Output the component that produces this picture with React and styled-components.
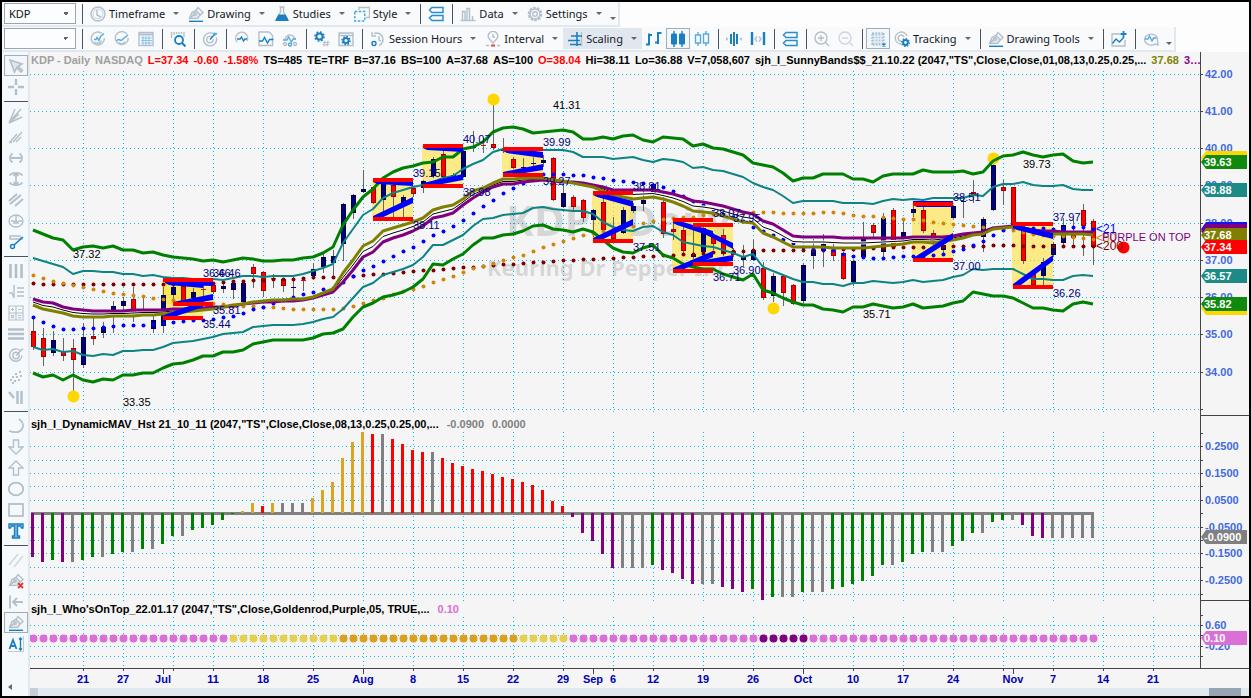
import React from "react";
import styled, { createGlobalStyle } from "styled-components";

const GlobalStyle = createGlobalStyle`
  *, *::before, *::after { box-sizing: border-box; }
  body { margin: 0; background: #f5f5f5; font-family: "Noto Sans", "Open Sans", sans-serif; }
`;

const chartFont = '"Liberation Sans", Arial, sans-serif';

/* ---------- frame ---------- */

const Frame = styled.div`
  min-height: 100vh;
  border: 2px solid #000;
  background: #fdfdfe;
  display: flex;
  flex-direction: column;
  overflow: hidden;
`;

const ToolRow = styled.div`
  width: fit-content;
  height: 25px;
  padding: 0 2px;
  display: flex;
  align-items: center;
  background: #f8fafc;
  border-right: 2px solid #e1e8f0;
  border-bottom: 2px solid #e1e8f0;
  white-space: nowrap;
`;

const Combo = styled.select`
  appearance: none;
  width: 72px;
  height: 21px;
  margin: 0 2px 0 0;
  padding: 0 4px;
  border: 1px solid #9aa6b5;
  border-radius: 0;
  outline: 0;
  font: 11px "Noto Sans", sans-serif;
  color: #111;
  background:
    linear-gradient(135deg, #666 50%, transparent 50%) 61px 8px / 3px 3px no-repeat,
    linear-gradient(225deg, #666 50%, transparent 50%) 58px 8px / 3px 3px no-repeat,
    #fcfdfe;
`;

const Divider = styled.div`
  flex: none;
  width: 1px;
  height: 20px;
  margin: 0 3px 0 4px;
  background: #4a5260;
`;

const IconButton = styled.button`
  flex: none;
  width: 24px;
  height: 21px;
  padding: 0;
  display: flex;
  align-items: center;
  justify-content: center;
  border: 1px solid ${(p) => (p.$on ? "#a2adba" : "transparent")};
  background: ${(p) => (p.$on ? "#f4f7fa" : "transparent")};
`;

const MenuButton = styled.button`
  flex: none;
  height: 21px;
  padding: 0 5px 0 4px;
  border: 0;
  display: flex;
  align-items: center;
  gap: 3px;
  font: 11px "Noto Sans", sans-serif;
  color: #14181e;
  background: ${(p) => (p.$on ? "#e0e7ef" : "transparent")};
`;

const Caret = styled.span`
  flex: none;
  margin-left: 5px;
  border: 3px solid transparent;
  border-top-color: #666;
  border-bottom: 0;
`;

const Overflow = styled(Caret)`
  margin: 9px 0 0 3px;
`;

const Main = styled.div`
  flex: 1;
  display: flex;
  min-width: 0;
`;

const SideBar = styled.nav`
  flex: none;
  width: 28px;
  padding: 3px 0 0 2px;
  background: #f6f9fb;
  border-right: 2px solid #e1e8f0;
  display: flex;
  flex-direction: column;
`;

const SideDivider = styled.div`
  width: 24px;
  height: 1px;
  margin: 4px 0 3px;
  background: #4a5260;
`;

const SideEnd = styled.span`
  margin: auto 0 6px 4px;
  border: 3px solid transparent;
  border-right: 4px solid #667;
  border-left: 0;
  width: 4px;
`;

/* ---------- icons ---------- */

const G = "#b3bfca";
const B = "#1a7fc1";
const L = "#5aa9dc";

const Svg = styled.svg`
  flex: none;
  width: 16px;
  height: 16px;
  fill: none;
  stroke: ${G};
  stroke-width: 1.4;
`;

const pen = (
  <g>
    <path d="M1.5 12.5L4 6.5l4-2.2 4.3 4.6-2.6 3.3z" fill="#e3e9ee" />
    <path d="M2 12l4-3.6M8 4.3L10 1.5l5 5-2.7 2.4" />
    <circle cx="7" cy="8" r="1.3" />
  </g>
);

const glyphs = {
  clock: <><circle cx="8" cy="8" r="7" /><circle cx="8" cy="8" r="5" strokeWidth="0.7" /><path d="M7 4v5l4 2" /></>,
  pen: <>{pen}<path d="M1 15.3h14" stroke={B} /></>,
  flask: <><path d="M5.5 1h5M6.5 1v5L2 13.5M9.5 1v5L14 13.5" /><path d="M4.5 8.5h7l3.5 6.5H1z" fill={B} stroke="none" /></>,
  style: <><path d="M5 4V1.5h10.5v10H12" /><path d="M.8 5.5h10v9.500h-10z" stroke="#38a9e4" strokeDasharray="2.5 1.5" /></>,
  layers: <path d="M4 1.5h11v5H4L1.5 4zM4 9.500h11v5H4L1.5 12z" stroke="#2c8dcb" strokeWidth="1.5" />,
  data: <><path d="M.5 14.5h15" /><path d="M2.5 14V5.5h2.500V14M7 14V2.500h2.500V14M12.500 14v-4" /></>,
  gear: <><circle cx="8" cy="8" r="6.2" strokeDasharray="2.6 1.2" strokeWidth="2.2" /><circle cx="8" cy="8" r="5" /><circle cx="8" cy="8" r="2.2" /></>,
  target: <><path d="M12 3.2A6.500 6.500 0 1 0 14.300 6.500" /><path d="M10 6a3.300 3.300 0 1 0 1.200 2" /><path d="M8 8.500L13 3" stroke={B} /><path d="M11.500 1.500l-.3 3 3-.3L15.500 2z" fill={L} stroke="none" /></>,
  scan: <><path d="M13 3.200A6.500 6.500 0 1 0 14.300 7" /><path d="M3 10c2-4 4 2 6-2l5-4" stroke={L} /><path d="M5 11.500a3.500 3.500 0 0 0 6-1" /></>,
  scanTarget: <><path d="M12 2.500A6.500 6.500 0 1 0 14.300 7" /><path d="M4 8.500h2l1-2 2 3 1.500-4L14 2.500" stroke={L} /><path d="M4.500 11a4.200 4.200 0 0 0 7-1.500" /></>,
  table: <><rect x="1" y="1.500" width="14" height="13" /><path d="M1 3.500h14" strokeWidth="2" /><path d="M3 7h11M3 9.500h11M3 12h11M5 5v9M8 5v9M11 5v9" stroke="#8cc3e6" strokeWidth="1" /></>,
  lookup: <><path d="M1.500 1v6M4 1v3M6.500 1v2M9 1v2M11.500 1v2M14 1v5" /><circle cx="9" cy="9" r="4" stroke={B} strokeWidth="1.8" /><path d="M12 12l3.500 3.500" stroke={B} strokeWidth="2" /></>,
  pulse: <><path d="M3 11A6 6 0 1 1 13 10" /><path d="M3 8h3l1.500-2 2 4 1.500-2h2" stroke={B} /></>,
  pulseBox: <><path d="M1 14.500V1h10l3.500 3.500v10z" /><path d="M1 10h3.500l2-3.500L9.500 12l2-3.500h4" stroke={B} /></>,
  pulseNet: <><path d="M3 9A5 5 0 1 1 13 9" /><path d="M1 9h4l1.500-3 3 5 1.500-3h3" stroke={L} /><circle cx="3" cy="13" r="1.5" /><circle cx="8" cy="13.500" r="1.5" stroke={L} /><circle cx="13" cy="13" r="1.5" /></>,
  gearHash: <><circle cx="5.500" cy="5.500" r="3.100" stroke={B} strokeWidth="2" /><circle cx="5.500" cy="5.500" r="4.600" stroke={B} strokeWidth="1.500" strokeDasharray="1.800 1.800" /><path d="M11 9.500l-1 6M14 9.500l-1 6M9 11.500h6.500M8.500 13.700h6.500" strokeWidth="1" /></>,
  gearBox: <><path d="M1 2h14v12.500H1zM1 4.500h14" /><circle cx="8" cy="9.500" r="2.600" stroke={B} strokeWidth="2" /><circle cx="8" cy="9.500" r="4" stroke={B} strokeWidth="1.500" strokeDasharray="1.600 1.500" /></>,
  session: <><path d="M4 2.500A6.500 6.500 0 1 1 9 14.500M2 1v4h4M9 5v4l2 1" /><circle cx="4" cy="12.500" r="2" stroke={B} /></>,
  interval: <><path d="M8 12L4 7.500a4.700 4.700 0 1 1 8 0zM8 3v3h2" /><path d="M1 14.500h3M12 14.500h3" /><path d="M6 14.500h4" stroke="#e8432e" strokeWidth="2" /></>,
  scaling: <><path d="M14.500 1v14" /><path d="M4 5h11M1 9.500h12M3 13.500h11M10 1v14" stroke={B} strokeWidth="1.600" /></>,
  ohlc: <><path d="M0 13.500h3.500M3 2.500v12M3 4h3" stroke={B} strokeWidth="2" /><path d="M9 11.500h3.500M12 1v12M12 2h3.500" stroke={B} strokeWidth="2" /></>,
  candles: <><path d="M4 0v16M12 0v16" stroke={B} /><rect x="1" y="2.500" width="6" height="11" rx="1" fill={B} stroke="none" /><rect x="9" y="2.500" width="6" height="11" rx="1" fill={B} stroke="none" /></>,
  hollow: <path d="M4 1v3M4 12v3M12 0v3M12 12v3M1.500 4h5v8h-5zM9.500 3h5v9h-5z" stroke={L} />,
  narrow: <><path d="M5 3v10M8 1v14M11 3v10" stroke={B} strokeWidth="2" /><path d="M0 6l2.500 2L0 10zM16 6l-2.500 2 2.500 2z" fill={G} stroke="none" /></>,
  widen: <><path d="M2 1v13M14 1v13" stroke={B} strokeWidth="2.400" /><path d="M7 5.500L5 8l2 2.500M9 5.500L11 8l-2 2.500" /></>,
  zoomIn: <><circle cx="7" cy="7" r="6" /><path d="M4 7h6M7 4v6M11.500 11.500L15 15" /></>,
  zoomOut: <g opacity=".6"><circle cx="7" cy="7" r="6" /><path d="M4 7h6M11.500 11.500L15 15" /></g>,
  grid: <><rect x="2" y="2" width="12" height="12" fill="#b5c8d8" stroke="#8fb8d6" strokeWidth="1" strokeDasharray="2 1" /><path d="M5 2v12M8 2v12M11 2v12M2 5h12M2 8h12M2 11h12" stroke="#f4f7fa" strokeWidth="1" /><path d="M12.500 12.500l3 3M15.500 12.500l-3 3" stroke={B} /></>,
  track: <><path d="M13 5A6 6 0 1 0 7 13M10 6a3 3 0 1 0-3 4" /><circle cx="11.500" cy="11.500" r="2.400" stroke={B} strokeWidth="2" /><circle cx="11.500" cy="11.500" r="3.900" stroke={B} strokeWidth="1.200" strokeDasharray="1.500 1.500" /></>,
  addChart: <><path d="M9 3H1v12h13V9" /><path d="M1.500 12.500L5 8l3.500 3L13 6" stroke={B} /><path d="M12.500 0v6M9.500 3h6" stroke={B} strokeWidth="1.800" /></>,
  chat: <><path d="M12 13A6.500 5.500 0 1 1 14.500 9.500L15 14z" /><path d="M2 8h3l1.500-3 2.500 5 1.500-3h3" stroke={L} /></>,
  cursor: <path d="M2 2l4.500 12 2.300-4.300L13 14l1.500-1.500-4.300-4.200L14 6z" fill="#dfe5ec" strokeWidth="1.600" />,
  cross: <path d="M8 0v6M8 10v6M0 8h6M10 8h6" strokeWidth="2.400" />,
  fan: <path d="M1 15L7 1M1 15l10-9M1 15l13-6M4 11l9-10M1 15l4-4" />,
  fanSmall: <path d="M2 13l7-8M5 13l9-10M8 13l5-5M1 13.500h3" />,
  hSpan: <path d="M3 8h10M4.500 3.500C1 6 1 10 4.500 12.500M11.500 3.500c3.500 2.500 3.500 6.500 0 9" strokeWidth="1.800" />,
  vSpan: <path d="M8 2v12M1.500 4.500C4 1 12 1 14.500 4.500M1.500 11.500c2.500 3.500 10.500 3.500 13 0M5.500 5L8 2l2.500 3M5.500 11L8 14l2.500-3" strokeWidth="1.600" />,
  channel: <path d="M1 9L9 2M2 12L13 3M7 14l8-7" strokeWidth="2" />,
  compass: <><ellipse cx="8" cy="8" rx="7" ry="6" /><path d="M8 2v5M3 8h3M10 8h4M6 10l2-3 2 3z" /></>,
  ruler: <><path d="M2 2h10l2 3H2z" /><circle cx="4.500" cy="12.500" r="2" stroke={B} /><path d="M6 11l9-8" stroke={B} strokeWidth="1.600" /></>,
  bars3: <path d="M2.500 1v14M8 1v14M13.500 1v14" strokeWidth="2.600" />,
  levels: <path d="M1 9h3l2 5V1M9 4h7M9 8h7M9 12h7" />,
  calc: <path d="M1 1h14v14H1zM8 1v14M1 8h14M3 4.500h3M4.500 3v3M10 4.500h3M3 10l3 3M6 10l-3 3M10 10.500h3M10 12.800h3" strokeWidth="1.100" />,
  lines3: <path d="M0 3.500h16M0 8h16M0 12.500h16" strokeWidth="2.600" />,
  spiral: <><path d="M15 1.500L8 8.500M12 3.500A6.200 6.200 0 1 0 14 8.500" /><circle cx="8" cy="8.500" r="3.200" /></>,
  dots: <path d="M2 12h2M6 13h2M10 12h2M4 9h2M8 9h2M12 8h2M7 6h2M11 4h2M4 15h2" strokeWidth="2" />,
  slash: <path d="M1 3l5 6M9.500 2v13M13.500 2v13" strokeWidth="2.400" />,
  arc: <path d="M11 1c4 3 5 7 3 10s-7 4-13 2" strokeWidth="1.800" />,
  down: <path d="M5.500 1h5v7H15l-7 7-7-7h4.500z" />,
  up: <path d="M5.500 15h5V8H15L8 1 1 8h4.500z" />,
  oval: <ellipse cx="8" cy="8" rx="7.200" ry="6.300" strokeWidth="1.800" />,
  rect: <rect x="1" y="2" width="14" height="12" strokeWidth="1.800" />,
  text: <path d="M1 1h14v4h-1.500l-1-2H9.500v10h2v2h-7v-2h2V3H3.500l-1 2H1z" fill="#7fbbe4" stroke={B} />,
  hatch: <path d="M1 13L10 2M6 15l9-11" opacity=".6" />,
  penX: <>{pen}<path d="M10 10l5 5M15 10l-5 5" stroke="#e8362e" strokeWidth="1.800" /></>,
  toStart: <path d="M2 1.500v13M15 8H5M9 4L5 8l4 4" strokeWidth="1.800" />,
  aText: <><path d="M1.500 13L5 4l3.500 9M2.700 10h4.600" stroke={B} strokeWidth="1.800" /><path d="M12.500 2v12M11 3.500L12.500 2 14 3.500M11 12.500l1.500 1.500 1.500-1.500" stroke={B} /><path d="M15.500 0v15.500H0" strokeWidth=".8" /></>,
};

const Icon = ({ name }) => (
  <Svg viewBox="0 0 16 16" aria-hidden="true">{glyphs[name]}</Svg>
);

const Tool = ({ icon, on }) => (
  <IconButton type="button" $on={on} aria-label={icon}><Icon name={icon} /></IconButton>
);

const Menu = ({ icon, on, children }) => (
  <MenuButton type="button" $on={on}>
    <Icon name={icon} />{children}<Caret />
  </MenuButton>
);

/* ---------- chart pieces ---------- */

const Charts = styled.main`
  flex: 1;
  min-width: 0;
  background: #f5f5f5;
  font-family: ${chartFont};
`;

const Panel = styled.section`
  display: flex;
`;

const PlotColumn = styled.div`
  flex: 1;
  min-width: 0;
`;

const PanelTitle = styled.div`
  height: 16px;
  padding: 0 1px;
  display: flex;
  gap: ${(p) => p.$gap}px;
  overflow: hidden;
  white-space: nowrap;
  font: bold 11px/16px ${chartFont};
  color: #000;
`;

const Value = styled.span`
  flex: none;
  color: ${(p) => p.$c || "#000"};
`;

const Clip = styled.span`
  flex: none;
  width: 18px;
  overflow: hidden;
  text-overflow: ellipsis;
  color: #8b008b;
`;

const Canvas = styled.svg`
  display: block;
  width: 100%;
  height: ${(p) => p.$h}px;
`;

const AxisCanvas = styled(Canvas)`
  flex: none;
  width: 49px;
`;

const ScrollTrack = styled.div`
  height: 8px;
  padding-right: 8px;
  display: flex;
  justify-content: space-between;
  background: #e1e9f0;
`;

const Thumb = styled.div`
  width: ${(p) => p.$w}px;
  background: ${(p) => p.$c};
`;

const LEFT = 30;
const STEP = 10;
const barX = (i) => 33 + i * STEP;

const gridX = [83, 123, 173, 213, 263, 313, 363, 413, 463, 513, 563, 613, 653, 703, 753, 803, 853, 903, 953, 1003, 1053, 1103, 1153];

const Grid = ({ ys, top, bottom }) => (
  <g stroke="#00bfff" strokeWidth="1" strokeDasharray="1 3" shapeRendering="crispEdges">
    {ys.map((y) => <path key={y} d={`M30 ${y + 0.5}H3000`} />)}
    {gridX.map((x) => <path key={x} d={`M${x + 0.5} ${top}V${bottom}`} />)}
  </g>
);

const Plot = ({ top, h, children }) => (
  <Canvas $h={h}><g transform={`translate(${-LEFT} ${-top})`}>{children}</g></Canvas>
);

/* one value per bar, ten bars to a line */
const upperGreen = [
  230, 234, 238, 240, 250, 247, 246, 248, 246, 250,
  250, 253, 252, 255, 257, 258, 259, 261, 260, 262,
  260, 258, 259, 261, 261, 260, 260, 258, 257, 253,
  247, 225, 210, 197, 189, 178, 172, 168, 166, 163,
  162, 157, 157, 149, 147, 142, 132, 128, 127, 129,
  133, 132, 131, 130, 132, 139, 139, 137, 139, 136,
  135, 140, 142, 137, 138, 139, 146, 144, 148, 149,
  152, 155, 163, 165, 167, 173, 181, 178, 178, 174,
  174, 174, 179, 179, 182, 176, 174, 174, 174, 170,
  172, 172, 172, 171, 174, 172, 161, 156, 155, 152,
  155, 157, 155, 154, 161, 163, 162,
];
const lowerGreen = [
  373, 377, 375, 380, 375, 380, 382, 379, 380, 375,
  375, 373, 373, 368, 364, 363, 360, 356, 356, 352,
  352, 350, 344, 342, 340, 340, 340, 340, 338, 334,
  333, 329, 317, 307, 303, 297, 295, 292, 287, 279,
  264, 265, 259, 254, 245, 238, 238, 235, 234, 231,
  226, 225, 229, 230, 232, 229, 232, 240, 248, 252,
  253, 248, 245, 255, 258, 264, 267, 269, 269, 274,
  277, 280, 274, 290, 293, 298, 302, 305, 305, 309,
  310, 312, 307, 307, 304, 306, 308, 307, 304, 308,
  307, 306, 303, 301, 292, 294, 296, 296, 298, 303,
  308, 308, 310, 311, 304, 302, 304,
];
const upperTeal = [
  258, 261, 264, 267, 274, 271, 271, 272, 272, 274,
  274, 276, 275, 277, 278, 278, 279, 279, 279, 280,
  278, 276, 276, 277, 276, 276, 276, 274, 271, 268,
  264, 243, 229, 215, 209, 198, 193, 190, 187, 185,
  182, 178, 176, 169, 164, 160, 152, 149, 149, 149,
  149, 150, 150, 150, 152, 157, 157, 157, 159, 158,
  157, 160, 162, 159, 160, 162, 168, 167, 170, 171,
  174, 177, 183, 187, 190, 196, 203, 201, 201, 201,
  201, 203, 203, 203, 204, 201, 199, 200, 199, 200,
  198, 198, 198, 198, 195, 196, 187, 184, 184, 182,
  185, 186, 186, 185, 189, 190, 190,
];
const lowerTeal = [
  347, 350, 349, 352, 351, 355, 356, 354, 355, 351,
  351, 350, 350, 347, 343, 342, 341, 339, 337, 334,
  333, 332, 327, 326, 325, 325, 325, 324, 322, 319,
  317, 309, 298, 287, 283, 275, 272, 269, 265, 257,
  245, 245, 240, 235, 226, 219, 218, 215, 214, 213,
  208, 207, 209, 210, 211, 211, 214, 222, 227, 230,
  231, 227, 226, 232, 235, 242, 244, 246, 247, 250,
  253, 257, 254, 267, 271, 275, 279, 282, 282, 284,
  284, 286, 283, 283, 281, 282, 283, 282, 280, 282,
  281, 280, 277, 275, 269, 270, 269, 269, 269, 274,
  279, 279, 280, 280, 276, 275, 276,
];
const purple = [
  299, 302, 303, 307, 309, 310, 311, 311, 311, 311,
  310, 310, 310, 310, 309, 309, 308, 308, 307, 307,
  306, 304, 303, 302, 302, 301, 301, 300, 298, 295,
  292, 282, 270, 257, 252, 242, 238, 235, 231, 226,
  218, 216, 213, 205, 198, 192, 187, 184, 184, 182,
  181, 180, 181, 182, 182, 183, 185, 187, 190, 190,
  190, 190, 190, 192, 194, 197, 201, 202, 204, 206,
  209, 212, 214, 221, 224, 230, 236, 237, 237, 237,
  237, 238, 238, 238, 238, 238, 238, 238, 237, 237,
  237, 237, 236, 234, 233, 232, 228, 227, 226, 228,
  230, 231, 231, 232, 232, 232, 232,
];
const olive = [
  305, 309, 311, 313, 316, 317, 317, 317, 316, 316,
  316, 315, 315, 314, 313, 312, 311, 310, 309, 307,
  305, 304, 302, 301, 300, 300, 299, 299, 297, 293,
  289, 273, 260, 246, 241, 231, 228, 225, 222, 218,
  210, 207, 205, 199, 191, 188, 183, 179, 179, 178,
  178, 178, 180, 181, 183, 185, 187, 191, 195, 197,
  199, 198, 197, 199, 202, 206, 211, 212, 213, 216,
  219, 222, 223, 233, 237, 242, 247, 247, 247, 247,
  248, 248, 248, 248, 247, 246, 245, 244, 242, 242,
  243, 241, 240, 238, 235, 234, 229, 228, 227, 228,
  231, 233, 234, 234, 234, 234, 235,
];
const blueDots = [
  317, 322, 326, 329, 329, 328, 328, 327, 326, 325,
  325, 325, 324, 323, 322, 321, 320, 320, 319, 317,
  316, 313, 309, 307, 303, 300, 297, 294, 292, 289,
  288, 282, 276, 270, 266, 261, 256, 251, 247, 241,
  235, 231, 226, 220, 213, 206, 200, 193, 188, 183,
  178, 174, 174, 174, 175, 175, 177, 178, 180, 181,
  182, 183, 185, 187, 191, 196, 201, 205, 209, 213,
  217, 221, 227, 231, 235, 239, 243, 247, 249, 249,
  250, 254, 256, 257, 258, 258, 257, 256, 256, 256,
  255, 254, 251, 249, 245, 241, 235, 230, 227, 227,
  228, 228, 229, 228, 227, 227, 229,
];
const orangeDots = [
  275, 278, 281, 283, 285, 287, 289, 291, 293, 294,
  295, 296, 298, 299, 300, 301, 302, 302, 303, 304,
  306, 306, 306, 307, 307, 308, 309, 309, 309, 309,
  309, 308, 306, 303, 300, 298, 294, 291, 289, 286,
  282, 279, 276, 272, 268, 266, 263, 260, 257, 255,
  251, 247, 244, 241, 238, 235, 233, 231, 229, 228,
  226, 223, 221, 219, 218, 217, 217, 215, 214, 214,
  213, 213, 212, 212, 212, 213, 213, 213, 213, 212,
  212, 213, 215, 216, 216, 217, 218, 219, 219, 220,
  222, 223, 224, 225, 226, 227, 228, 229, 230, 232,
  234, 235, 236, 236, 237, 238, 239,
];
const maroonDots = [
  283, 284, 284, 284, 284, 284, 284, 284, 284, 284,
  284, 284, 284, 284, 284, 284, 284, 283, 283, 282,
  281, 281, 280, 280, 279, 279, 279, 278, 277, 277,
  277, 276, 276, 275, 274, 274, 273, 272, 271, 270,
  270, 269, 268, 267, 267, 266, 265, 264, 264, 263,
  262, 262, 261, 260, 260, 259, 259, 258, 258, 257,
  257, 256, 256, 255, 255, 254, 254, 253, 252, 252,
  251, 251, 250, 250, 250, 250, 250, 250, 250, 250,
  249, 249, 249, 249, 248, 248, 247, 247, 247, 247,
  247, 246, 246, 246, 246, 246, 245, 245, 245, 246,
  246, 246, 246, 246, 246, 246, 246,
];

/* rows: bar index, high, body top, body bottom, low, colour */
const candles = [
  [0, 318, 331, 347, 350, "r"], [1, 328, 338, 357, 366, "r"], [2, 331, 340, 353, 356, "b"], [3, 338, 352, 356, 361, "r"],
  [4, 339, 348, 360, 392, "r"], [5, 323, 337, 365, 368, "b"], [6, 317, 336, 339, 345, "r"], [7, 322, 327, 333, 338, "b"],
  [8, 301, 306, 315, 333, "b"], [9, 297, 301, 306, 311, "b"], [10, 287, 299, 313, 322, "r"], [11, 298, 312, 314, 316, "b"],
  [12, 316, 320, 329, 333, "b"], [13, 287, 295, 326, 333, "b"], [14, 283, 287, 295, 300, "b"], [15, 284, 286, 302, 305, "r"],
  [16, 288, 292, 298, 301, "b"], [17, 283, 289, 290, 296, "r"], [18, 283, 285, 292, 294, "r"], [19, 282, 286, 289, 293, "b"],
  [20, 280, 283, 290, 299, "b"], [21, 281, 283, 302, 303, "b"], [22, 264, 267, 274, 288, "r"], [23, 271, 272, 291, 297, "r"],
  [24, 274, 278, 279, 288, "r"], [25, 278, 279, 286, 292, "r"], [26, 277, 287, 288, 297, "b"], [27, 277, 280, 281, 291, "r"],
  [28, 263, 269, 276, 278, "b"], [29, 253, 257, 267, 273, "b"], [30, 250, 256, 263, 278, "b"], [31, 203, 204, 244, 261, "b"],
  [32, 194, 195, 213, 219, "b"], [33, 170, 189, 192, 193, "b"], [34, 187, 187, 203, 204, "r"], [35, 182, 183, 200, 213, "b"],
  [36, 183, 185, 197, 217, "r"], [37, 195, 197, 203, 217, "b"], [38, 187, 188, 194, 197, "r"], [39, 180, 181, 188, 193, "b"],
  [40, 157, 159, 176, 178, "b"], [41, 150, 154, 177, 180, "r"], [42, 173, 175, 178, 180, "b"], [43, 149, 151, 177, 178, "b"],
  [44, 131, 146, 148, 152, "b"], [45, 138, 145, 146, 153, "r"], [46, 103, 144, 148, 150, "r"], [47, 138, 150, 151, 153, "b"],
  [48, 157, 159, 168, 169, "r"], [49, 158, 167, 168, 172, "b"], [50, 157, 163, 164, 170, "b"], [51, 155, 160, 163, 167, "b"],
  [52, 157, 158, 200, 201, "r"], [53, 184, 193, 207, 208, "b"], [54, 195, 197, 207, 211, "r"], [55, 199, 200, 218, 222, "r"],
  [56, 209, 210, 220, 237, "b"], [57, 198, 202, 230, 233, "r"], [58, 217, 233, 239, 241, "r"], [59, 207, 210, 233, 234, "b"],
  [60, 203, 206, 211, 213, "b"], [61, 189, 200, 204, 211, "b"], [62, 183, 184, 194, 195, "b"], [63, 193, 202, 234, 238, "r"],
  [64, 220, 229, 232, 240, "r"], [65, 223, 230, 251, 253, "r"], [66, 230, 254, 257, 259, "b"], [67, 223, 228, 252, 254, "b"],
  [68, 233, 236, 244, 250, "r"], [69, 229, 235, 254, 256, "r"], [70, 248, 251, 255, 257, "r"], [71, 245, 257, 260, 266, "b"],
  [72, 240, 250, 260, 261, "b"], [73, 262, 268, 298, 300, "r"], [74, 273, 276, 296, 302, "b"], [75, 275, 276, 293, 306, "r"],
  [76, 284, 285, 304, 305, "r"], [77, 263, 265, 301, 303, "b"], [78, 239, 250, 256, 269, "b"], [79, 234, 244, 251, 267, "b"],
  [80, 242, 250, 256, 261, "r"], [81, 252, 253, 279, 280, "r"], [82, 260, 261, 282, 286, "b"], [83, 222, 239, 257, 258, "b"],
  [84, 223, 225, 233, 237, "r"], [85, 213, 218, 252, 257, "b"], [86, 208, 210, 247, 248, "r"], [87, 218, 232, 237, 243, "b"],
  [88, 205, 209, 213, 217, "b"], [89, 207, 210, 231, 233, "r"], [90, 230, 233, 242, 245, "r"], [91, 243, 245, 250, 255, "b"],
  [92, 205, 206, 218, 219, "b"], [93, 198, 201, 202, 218, "b"], [94, 180, 192, 195, 203, "r"], [95, 217, 219, 237, 252, "b"],
  [96, 160, 165, 210, 211, "b"], [97, 180, 187, 191, 205, "r"], [98, 187, 187, 225, 226, "r"], [99, 230, 231, 261, 264, "r"],
  [100, 270, 274, 285, 286, "r"], [101, 258, 262, 276, 285, "b"], [102, 242, 244, 255, 257, "b"], [103, 218, 225, 243, 247, "b"],
  [104, 218, 235, 238, 245, "r"], [105, 204, 210, 226, 256, "r"], [106, 219, 221, 247, 265, "r"],
];

const linePath = (ys) => "M" + ys.map((y, i) => `${barX(i)} ${y}`).join("L");

const Dots = ({ ys, color }) => (
  <g fill={color}>
    {ys.map((y, i) => <circle key={i} cx={barX(i) + 0.5} cy={y + 0.5} r="2" />)}
  </g>
);

const boxes = [
  [162, 280, 51, 24], [162, 280, 41, 38], [372, 180, 41, 39], [422, 146, 41, 40], [502, 149, 41, 26], [592, 193, 41, 48],
  [672, 220, 41, 51], [692, 225, 41, 39], [912, 203, 41, 57], [1012, 224, 41, 63],
];
const levelBars = [
  [163, 280, 50], [173, 304, 40], [163, 318, 40], [373, 180, 40], [373, 219, 40], [423, 146, 40], [423, 186, 40],
  [503, 149, 40], [503, 175, 40], [593, 193, 40], [593, 241, 40], [673, 220, 40], [693, 225, 40], [673, 271, 40],
  [693, 264, 40], [913, 204, 40], [913, 260, 40], [1013, 224, 40], [1013, 287, 40],
];
/* wedge: start x, start y, end x, end y */
const wedges = [
  [165, 281, 203, 285], [173, 281, 213, 283], [173, 304, 213, 297], [164, 317, 203, 304], [373, 180, 413, 183], [373, 218, 413, 200],
  [423, 146, 463, 149], [423, 185, 463, 177], [503, 149, 543, 155], [503, 174, 543, 167], [593, 193, 633, 204],
  [593, 240, 633, 222], [673, 221, 713, 234], [693, 226, 733, 246], [673, 270, 713, 254], [693, 264, 733, 258],
  [913, 203, 953, 204], [913, 260, 953, 236], [1013, 226, 1053, 236], [1013, 286, 1053, 258],
];

const priceLabels = [
  [203, 277, "36.46"], [213, 277, "36.46"], [213, 314, "35.81"], [203, 328, "35.44"], [413, 177, "39.15"], [413, 229, "38.11"],
  [463, 143, "40.07"], [463, 196, "38.98"], [543, 146, "39.99"], [543, 185, "39.27"], [633, 190, "38.81"], [633, 251, "37.51"],
  [713, 217, "38.07"], [733, 222, "37.95"], [733, 274, "36.90"], [713, 281, "36.71"], [953, 201, "38.51"], [953, 270, "37.00"],
  [1053, 221, "37.97"], [1053, 297, "36.26"],
];
const swingLabels = [[73, 258, "37.32"], [123, 406, "33.35"], [553, 109, "41.31"], [863, 318, "35.71"], [1023, 168, "39.73"]];

const middle = purple.map((y, i) => (y + olive[i]) / 2);

const PricePlot = () => (
  <Plot top={68} h={348}>
    <Grid ys={[74, 111, 148, 185, 223, 260, 297, 334, 372, 409]} top={67} bottom={413} />
    <g fill="#000" fillOpacity=".14" fontWeight="bold" fontFamily='"Noto Sans", sans-serif'>
      <text x="506" y="236" fontSize="42">KDP - Daily</text>
      <text x="487" y="276" fontSize="22">Keuring Dr Pepper Inc</text>
    </g>
    <g fill="#ffe23c" fillOpacity=".6">
      {boxes.map(([x, y, w, h], i) => <rect key={i} x={x} y={y} width={w} height={h} />)}
    </g>
    <g shapeRendering="crispEdges">
      {candles.map(([i, hi, t, b, lo, c]) => (
        <g key={i}>
          <path d={`M${barX(i) + 0.5} ${hi}V${lo}`} stroke="#666" />
          <rect x={barX(i) - 2} y={t} width="5" height={Math.max(b - t, 1)} fill={c === "r" ? "#f00" : "#000080"} />
          {b - t > 2 && (
            <rect x={barX(i) - 1.5} y={t + 0.5} width="4" height={b - t - 1} fill="none" stroke={c === "r" ? "#a00000" : "#00003c"} strokeWidth="1" />
          )}
        </g>
      ))}
    </g>
    <Dots ys={maroonDots} color="#800000" />
    <Dots ys={orangeDots} color="#d08608" />
    <Dots ys={blueDots} color="#00f" />
    <g fill="#ffd700">
      <circle cx="73.5" cy="396.5" r="6" /><circle cx="493.5" cy="99.5" r="6" />
      <circle cx="773.5" cy="308.5" r="6" /><circle cx="993.5" cy="158.5" r="6" />
    </g>
    <g fill="none" strokeLinejoin="round">
      <path d={linePath(lowerTeal)} stroke="#0c8484" strokeWidth="2" />
      <path d={linePath(upperTeal)} stroke="#0c8484" strokeWidth="2" />
      <path d={linePath(upperGreen)} stroke="#008000" strokeWidth="3" />
      <path d={linePath(lowerGreen)} stroke="#008000" strokeWidth="3" />
      <path d={linePath(middle)} stroke="#fff" strokeWidth="3" />
      <path d={linePath(middle)} stroke="#000" strokeWidth="1" />
      <path d={linePath(purple)} stroke="#800080" strokeWidth="3" />
      <path d={linePath(olive)} stroke="#808000" strokeWidth="3" />
    </g>
    <g fill="#00f">
      {wedges.map(([x1, y1, x2, y2], i) => (
        <path key={i} d={`M${x1} ${y1 - 2}L${x2} ${y2 - 3}V${y2 + 3}L${x1 + 4} ${y1 + (y2 > y1 ? 4 : 2)}L${x1} ${y1 + 2}z`} />
      ))}
    </g>
    <g fill="#f00" shapeRendering="crispEdges">
      {levelBars.map(([x, y, w], i) => <rect key={i} x={x} y={y - 2} width={w} height="4" />)}
      <circle cx="1123.5" cy="247.5" r="6" shapeRendering="auto" />
    </g>
    <g fontFamily={chartFont} fontSize="11">
      {priceLabels.map(([x, y, t], i) => <text key={i} x={x} y={y} fill="#000080">{t}</text>)}
      {swingLabels.map(([x, y, t]) => <text key={t} x={x} y={y} fill="#000">{t}</text>)}
      <text x="1096" y="233" fontSize="12" fill="#00f">&lt;21</text>
      <text x="1096" y="242" fontSize="12" fill="#d08608">&lt;50</text>
      <text x="1102" y="241" fill="#800080">PURPLE ON TOP</text>
      <text x="1096" y="250" fontSize="12" fill="#800000">&lt;200</text>
    </g>
  </Plot>
);

const barColors = { P: "#800080", G: "#008000", X: "#808080", O: "#daa520", R: "#f00" };
const histogram =
  "P557 P562 G560 P562 X562 G560 G557 X557 G554 G552 X552 G549 X549 G544 G536 X536 G530 G528 G525 G520 G514 O511 O503 R506 O503 X503 X503 X503 O498 O490 O482 O458 O442 O431 R434 X434 R439 R444 R450 R452 X452 R458 R463 R466 R469 R471 R474 R477 R479 R482 R485 R490 R501 R506 P517 P533 P541 P554 P568 X568 X568 X568 G565 P570 P573 P579 P584 X584 X584 P587 P589 P592 G589 P600 G597 X597 X597 G592 X592 X592 G589 G587 G584 G581 G576 G565 X565 G562 G554 G552 X552 X552 G546 G541 G533 X533 G522 G520 X520 P525 P536 P538 X538 X538 X538 X538 X538".split(" ");

const HistogramPlot = () => (
  <Plot top={432} h={169}>
    <Grid ys={[446, 460, 473, 486, 500, 527, 540, 553, 567, 580, 594]} top={432} bottom={601} />
    <g shapeRendering="crispEdges">
      <rect x="31" y="512" width="1063" height="3" fill="#808080" />
      {histogram.map((s, i) => {
        const y = +s.slice(1);
        return <rect key={i} x={31 + i * STEP} y={Math.min(y, 513)} width="3" height={Math.abs(y - 513)} fill={barColors[s[0]]} />;
      })}
    </g>
  </Plot>
);

const dotColor = (i) => {
  if (i >= 73 && i <= 77) return "#800080";
  if (i >= 31 && i <= 48) return "#daa020";
  if (i >= 20 && i <= 53) return "#e4d052";
  return "#da70d6";
};

const TrendPlot = () => (
  <Plot top={617} h={51}>
    <Grid ys={[625, 635, 646, 656]} top={617} bottom={667} />
    {histogram.map((_, i) => <circle key={i} cx={barX(i) + 0.5} cy="638.5" r="4" fill={dotColor(i)} />)}
  </Plot>
);

const Axis = ({ top, h, ticks, labels, tags, base = true }) => (
  <AxisCanvas $h={h}>
    <g transform={`translate(-1200 ${-top})`} fontFamily={chartFont} fontSize="11" fontWeight="bold">
      <g stroke="#444" shapeRendering="crispEdges">
        <path d={`M1200.5 ${top}v${h}`} />
        {base && <path d={`M1199 ${top + h - 0.5}h50`} />}
        {ticks.map((y) => <path key={y} d={`M1201 ${y + 0.5}h2`} />)}
      </g>
      {labels.map(([y, t]) => <text key={t} x="1205" y={y + 4} fill="#4169e1">{t}</text>)}
      {tags.map(([y, c, t]) => (
        <g key={c + y}>
          <path d={`M1201 ${y}l5 -7h41v14h-41z`} fill={c} />
          {t && <text x="1204" y={y + 4} fill="#fff">{t}</text>}
        </g>
      ))}
    </g>
  </AxisCanvas>
);

const dates = [
  [83, "21"], [123, "27"], [163, "Jul", 1], [213, "11"], [263, "18"], [313, "25"], [363, "Aug", 1], [413, "8"], [463, "15"],
  [513, "22"], [563, "29"], [593, "Sep", 1], [613, "6"], [653, "12"], [703, "19"], [753, "26"], [803, "Oct", 1], [853, "10"],
  [903, "17"], [953, "24"], [1013, "Nov", 1], [1053, "7"], [1103, "14"], [1153, "21"],
];

const TimeAxis = () => (
  <Canvas $h={20}>
    <g transform="translate(-30 -668)" fontFamily={chartFont} fontSize="11" fontWeight="bold" fill="#0000b4" textAnchor="middle">
      <g stroke="#444" shapeRendering="crispEdges">
        <path d="M30 668.5H3000" />
        {gridX.map((x) => <path key={x} d={`M${x + 0.5} 668v3`} />)}
        {dates.filter((d) => d[2]).map(([x]) => <path key={x} d={`M${x + 0.5} 668v6`} />)}
      </g>
      {dates.map(([x, t]) => <text key={x} x={x} y="683">{t}</text>)}
    </g>
  </Canvas>
);

const quote = [
  ["KDP - Daily", "#a0a0a0"], ["NASDAQ", "#a0a0a0"], ["L=37.34", "#f00"], ["-0.60", "#f00"], ["-1.58%", "#f00"], ["TS=485"], ["TE=TRF"],
  ["B=37.16"], ["BS=100"], ["A=37.68"], ["AS=100"], ["O=38.04", "#f00"], ["Hi=38.11"], ["Lo=36.88"], ["V=7,058,607"],
  ['sjh_I_SunnyBands$$_21.10.22 (2047,"TS",Close,Close,01,08,13,0.25,0.25,...'], ["37.68", "#808000"],
];

const sideGroups = [
  ["cursor", "cross"],
  ["fan", "fanSmall", "hSpan", "vSpan", "channel", "compass", "ruler"],
  ["bars3", "levels", "calc", "lines3", "spiral", "dots", "slash"],
  ["arc", "down", "up", "oval", "rect", "text"],
  ["hatch", "penX", "toStart", "pen", "aText"],
];

export default function App() {
  return (
    <Frame>
      <GlobalStyle />
      <ToolRow>
        <Combo aria-label="Symbol" defaultValue="KDP"><option>KDP</option></Combo>
        <Divider />
        <Menu icon="clock">Timeframe</Menu>
        <Menu icon="pen">Drawing</Menu>
        <Menu icon="flask">Studies</Menu>
        <Menu icon="style">Style</Menu>
        <Divider />
        <Tool icon="layers" />
        <Divider />
        <Menu icon="data">Data</Menu>
        <Menu icon="gear">Settings</Menu>
        <Overflow />
      </ToolRow>
      <ToolRow>
        <Combo aria-label="Template" defaultValue=""><option value="" aria-label="None" /></Combo>
        <Divider />
        <Tool icon="scanTarget" /><Tool icon="scan" /><Tool icon="table" />
        <Divider />
        <Tool icon="lookup" />
        <Divider />
        <Tool icon="target" />
        <Divider />
        <Tool icon="pulse" /><Tool icon="pulseBox" /><Tool icon="pulseNet" />
        <Divider />
        <Tool icon="gearHash" /><Tool icon="gearBox" />
        <Divider />
        <Menu icon="session">Session Hours</Menu>
        <Menu icon="interval">Interval</Menu>
        <Menu icon="scaling" on>Scaling</Menu>
        <Tool icon="ohlc" /><Tool icon="candles" on /><Tool icon="hollow" />
        <Divider />
        <Tool icon="narrow" /><Tool icon="widen" />
        <Divider />
        <Tool icon="layers" />
        <Divider />
        <Tool icon="zoomIn" /><Tool icon="zoomOut" />
        <Divider />
        <Tool icon="grid" on />
        <Menu icon="track">Tracking</Menu>
        <Divider />
        <Menu icon="pen">Drawing Tools</Menu>
        <Divider />
        <Tool icon="addChart" />
        <Divider />
        <Tool icon="chat" />
        <Overflow />
      </ToolRow>
      <Main>
        <SideBar aria-label="Drawing tools">
          {sideGroups.map((group, g) => (
            <React.Fragment key={g}>
              {g > 0 && <SideDivider />}
              {group.map((n) => <Tool key={n} icon={n} on={n === "cursor" || n === "pen"} />)}
            </React.Fragment>
          ))}
          <SideEnd />
        </SideBar>
        <Charts>
          <Panel>
            <PlotColumn>
              <PanelTitle $gap={5}>
                {quote.map(([t, c]) => <Value key={t} $c={c}>{t}</Value>)}
                <Clip>37.73</Clip>
              </PanelTitle>
              <PricePlot />
            </PlotColumn>
            <Axis
              top={52} h={364}
              ticks={[74, 111, 148, 185, 223, 260, 297, 334, 372, 409]}
              labels={[[74, "42.00"], [111, "41.00"], [148, "40.00"], [185, "39.00"], [223, "38.00"], [260, "37.00"], [297, "36.00"], [334, "35.00"], [372, "34.00"]]}
              tags={[
                [158, "#ffd700"], [162, "#0f8a0f", "39.63"], [190, "#1c8a86", "38.88"], [229, "#1414f0"], [231, "#800080"],
                [235, "#808000", "37.68"], [247, "#f00", "37.34"], [276, "#1c8a86", "36.57"], [308, "#ffd700"], [304, "#0f8a0f", "35.82"],
              ]}
            />
          </Panel>
          <Panel>
            <PlotColumn>
              <PanelTitle $gap={8}>
                <Value>sjh_I_DynamicMAV_Hst 21_10_11 (2047,"TS",Close,Close,08,13,0.25,0.25,00,...</Value>
                <Value $c="#808080">-0.0900</Value>
                <Value $c="#808080">0.0000</Value>
              </PanelTitle>
              <HistogramPlot />
            </PlotColumn>
            <Axis
              top={416} h={185}
              ticks={[433, 446, 460, 473, 486, 500, 513, 527, 540, 553, 567, 580, 594]}
              labels={[[446, "0.2500"], [473, "0.1500"], [500, "0.0500"], [527, "-0.0500"], [553, "-0.1500"], [580, "-0.2500"]]}
              tags={[[537, "#808080", "-0.0900"]]}
            />
          </Panel>
          <Panel>
            <PlotColumn>
              <PanelTitle $gap={8}>
                <Value>sjh_I_Who'sOnTop_22.01.17 (2047,"TS",Close,Goldenrod,Purple,05, TRUE,...</Value>
                <Value $c="#da70d6">0.10</Value>
              </PanelTitle>
              <TrendPlot />
            </PlotColumn>
            <Axis
              top={601} h={67} base={false}
              ticks={[615, 625, 635, 646, 656]}
              labels={[[625, "0.60"], [646, "-0.20"]]}
              tags={[[638, "#da70d6", "0.10"]]}
            />
          </Panel>
          <TimeAxis />
          <ScrollTrack>
            <Thumb $w={8} $c="#c3ced8" />
            <Thumb $w={32} $c="#96a4b4" />
          </ScrollTrack>
        </Charts>
      </Main>
    </Frame>
  );
}
